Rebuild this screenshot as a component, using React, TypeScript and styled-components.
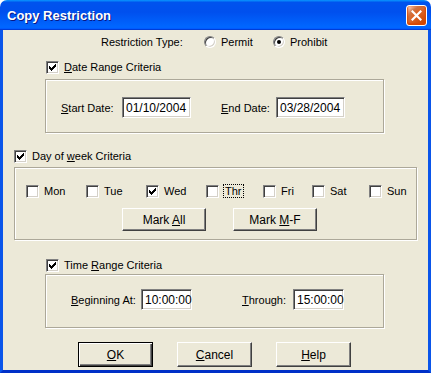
import React from "react";
import styled, { createGlobalStyle } from "styled-components";

const Global = createGlobalStyle`
  html, body { margin: 0; padding: 0; background: #fff; }
  * { box-sizing: border-box; }
`;

const Window = styled.div`
  width: 431px;
  height: 373px;
  display: flex;
  flex-direction: column;
  font-family: "Liberation Sans", Arial, sans-serif;
  font-size: 11px;
  color: #000;
`;

const TitleBar = styled.div`
  height: 30px;
  flex: none;
  display: flex;
  align-items: center;
  justify-content: space-between;
  padding: 0 4px 0 7px;
  border-radius: 7px 7px 0 0;
  background: linear-gradient(180deg, #0997ff, #0053ee 8%, #0050ee 40%, #06f 88%, #06f 93%, #005bff 95%, #003dd7 96%, #003dd7);
`;

const Title = styled.span`
  font-family: "Liberation Sans", Arial, sans-serif;
  font-weight: bold;
  font-size: 13px;
  color: #fff;
  text-shadow: 1px 1px #0a1883;
`;

const CloseButton = styled.div`
  width: 21px;
  height: 21px;
  border: 1px solid #fff;
  border-radius: 3px;
  display: flex;
  align-items: center;
  justify-content: center;
  background: radial-gradient(circle at 90% 90%, #cc4600 0, #dc6527 55%, #cd7546 70%, #ffccb2 90%, #fff 100%);
  box-shadow: inset 0 -1px 2px 1px #da4600;
`;

const Client = styled.div`
  flex: 1;
  background: #ece9d8;
  border-left: 3px solid #0a55ea;
  border-right: 3px solid #0a55ea;
  border-bottom: 3px solid #0030c8;
  display: flex;
  flex-direction: column;
`;

const Row = styled.div<{ $top: number; $left: number; $h?: number }>`
  display: flex;
  align-items: center;
  margin-top: ${(p) => p.$top}px;
  margin-left: ${(p) => p.$left}px;
  height: ${(p) => p.$h ?? 14}px;
`;

const FixedLabel = styled.span<{ $w: number; $gap?: number }>`
  width: ${(p) => p.$w}px;
  margin-left: ${(p) => p.$gap ?? 0}px;
  flex: none;
  white-space: nowrap;
`;

const RadioOption = styled.label<{ $w?: number }>`
  display: flex;
  align-items: center;
  gap: 5px;
  width: ${(p) => (p.$w ? `${p.$w}px` : "auto")};
`;

const RadioCircle = styled.span<{ $on?: boolean }>`
  width: 12px;
  height: 12px;
  border-radius: 50%;
  background: #fff;
  border: 1px solid;
  border-color: #808080 #fff #fff #808080;
  box-shadow: inset 1px 1px 0 #404040, inset -1px -1px 0 #d4d0c8;
  display: flex;
  align-items: center;
  justify-content: center;
  &::after {
    content: "";
    width: 4px;
    height: 4px;
    border-radius: 50%;
    background: ${(p) => (p.$on ? "#000" : "transparent")};
  }
`;

const CheckOption = styled.label`
  display: flex;
  align-items: center;
  gap: 5px;
  white-space: nowrap;
`;

const CheckBox = styled.span`
  width: 13px;
  height: 13px;
  flex: none;
  background: #fff;
  border: 1px solid;
  border-color: #808080 #fff #fff #808080;
  box-shadow: inset 1px 1px 0 #404040, inset -1px -1px 0 #d4d0c8;
  display: flex;
  align-items: center;
  justify-content: center;
`;

const FocusText = styled.span`
  outline: 1px dotted #000;
  outline-offset: 0px;
  padding: 0 1px;
`;

const Group = styled.div<{ $top: number; $left: number; $w: number; $h: number }>`
  margin-top: ${(p) => p.$top}px;
  margin-left: ${(p) => p.$left}px;
  width: ${(p) => p.$w}px;
  height: ${(p) => p.$h}px;
  flex: none;
  border: 1px solid #aca899;
  box-shadow: 1px 1px 0 #fff, inset 1px 1px 0 #fff;
  display: flex;
  flex-direction: column;
`;

const FieldRow = styled.div<{ $top: number; $left: number }>`
  display: flex;
  align-items: center;
  margin-top: ${(p) => p.$top}px;
  padding-left: ${(p) => p.$left}px;
  height: 21px;
`;

const TextBox = styled.div<{ $w: number }>`
  width: ${(p) => p.$w}px;
  height: 21px;
  flex: none;
  background: #fff;
  border: 1px solid;
  border-color: #808080 #fff #fff #808080;
  box-shadow: inset 1px 1px 0 #404040, inset -1px -1px 0 #d4d0c8;
  padding: 0 0 0 3px;
  display: flex;
  align-items: center;
  font-size: 12px;
`;

const DaysGrid = styled.div`
  display: grid;
  grid-template-columns: 60px 60px 60px 57px 49px 57px auto;
  margin-top: 16px;
  padding-left: 11px;
  height: 14px;
  align-items: center;
`;

const ButtonRow = styled.div<{ $top: number; $left: number; $gap: number }>`
  display: flex;
  gap: ${(p) => p.$gap}px;
  margin-top: ${(p) => p.$top}px;
  margin-left: ${(p) => p.$left}px;
`;

const Button = styled.div<{ $w: number; $h: number; $default?: boolean }>`
  width: ${(p) => p.$w}px;
  height: ${(p) => p.$h}px;
  flex: none;
  display: flex;
  align-items: center;
  justify-content: center;
  background: #ece9d8;
  border: 1px solid;
  border-color: ${(p) => (p.$default ? "#000" : "#fff #404040 #404040 #fff")};
  box-shadow: ${(p) =>
    p.$default
      ? "inset 1px 1px 0 #fff, inset -1px -1px 0 #404040, inset -2px -2px 0 #808080"
      : "inset -1px -1px 0 #808080, inset 1px 1px 0 #ece9d8"};
  font-size: 12px;
`;

const Check = () => (
  <svg width="7" height="7" viewBox="0 0 7 7" shapeRendering="crispEdges">
    <path
      d="M0 2h1v3H0zM1 3h1v3H1zM2 4h1v3H2zM3 3h1v3H3zM4 2h1v3H4zM5 1h1v3H5zM6 0h1v3H6z"
      fill="#000"
    />
  </svg>
);

const Box = ({ on }: { on?: boolean }) => <CheckBox>{on ? <Check /> : null}</CheckBox>;

const days: { label: React.ReactNode; on?: boolean }[] = [
  { label: "Mon" },
  { label: "Tue" },
  { label: "Wed", on: true },
  { label: <FocusText>Thr</FocusText> },
  { label: "Fri" },
  { label: "Sat" },
  { label: "Sun" },
];

export default function App() {
  return (
    <>
      <Global />
      <Window>
        <TitleBar>
          <Title>Copy Restriction</Title>
          <CloseButton>
            <svg width="11" height="11" viewBox="0 0 11 11">
              <path d="M1.5 1.5L9.5 9.5M9.5 1.5L1.5 9.5" stroke="#fff" strokeWidth="2.2" strokeLinecap="square" />
            </svg>
          </CloseButton>
        </TitleBar>
        <Client>
          <Row $top={5} $left={98}>
            <FixedLabel $w={103}>Restriction Type:</FixedLabel>
            <RadioOption $w={69}>
              <RadioCircle />
              Permit
            </RadioOption>
            <RadioOption>
              <RadioCircle $on />
              Prohibit
            </RadioOption>
          </Row>

          <Row $top={11} $left={43}>
            <CheckOption>
              <Box on />
              <span>
                <u>D</u>ate Range Criteria
              </span>
            </CheckOption>
          </Row>
          <Group $top={5} $left={42} $w={339} $h={54}>
            <FieldRow $top={17} $left={15}>
              <FixedLabel $w={61}>
                <u>S</u>tart Date:
              </FixedLabel>
              <TextBox $w={69}>01/10/2004</TextBox>
              <FixedLabel $w={55} $gap={30}>
                <u>E</u>nd Date:
              </FixedLabel>
              <TextBox $w={69}>03/28/2004</TextBox>
            </FieldRow>
          </Group>

          <Row $top={16} $left={11}>
            <CheckOption>
              <Box on />
              <span>
                Day of <u>w</u>eek Criteria
              </span>
            </CheckOption>
          </Row>
          <Group $top={4} $left={11} $w={403} $h={73}>
            <DaysGrid>
              {days.map((d, i) => (
                <CheckOption key={i}>
                  <Box on={d.on} />
                  {d.label}
                </CheckOption>
              ))}
            </DaysGrid>
            <ButtonRow $top={10} $left={107} $gap={27}>
              <Button $w={84} $h={23}>
                <span>
                  Mark <u>A</u>ll
                </span>
              </Button>
              <Button $w={84} $h={23}>
                <span>
                  Mark <u>M</u>-F
                </span>
              </Button>
            </ButtonRow>
          </Group>

          <Row $top={18} $left={43}>
            <CheckOption>
              <Box on />
              <span>
                Time <u>R</u>ange Criteria
              </span>
            </CheckOption>
          </Row>
          <Group $top={2} $left={42} $w={339} $h={54}>
            <FieldRow $top={14} $left={25}>
              <FixedLabel $w={70}>
                <u>B</u>eginning At:
              </FixedLabel>
              <TextBox $w={51}>10:00:00</TextBox>
              <FixedLabel $w={51} $gap={50}>
                <u>T</u>hrough:
              </FixedLabel>
              <TextBox $w={51}>15:00:00</TextBox>
            </FieldRow>
          </Group>

          <ButtonRow $top={14} $left={75} $gap={24}>
            <Button $w={75} $h={25} $default>
              <span>
                <u>O</u>K
              </span>
            </Button>
            <Button $w={75} $h={25}>
              <span>
                <u>C</u>ancel
              </span>
            </Button>
            <Button $w={75} $h={25}>
              <span>
                <u>H</u>elp
              </span>
            </Button>
          </ButtonRow>
        </Client>
      </Window>
    </>
  );
}
